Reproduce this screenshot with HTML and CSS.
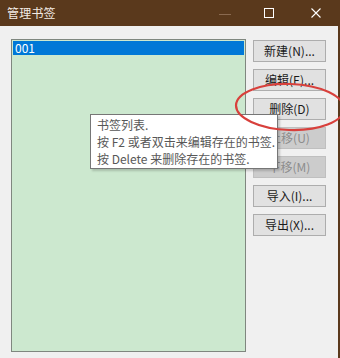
FILE: index.html
```html
<!DOCTYPE html>
<html lang="zh">
<head>
<meta charset="utf-8">
<link rel="stylesheet" href="styles.css">
</head>
<body>
<div class="window">
  <div class="titlebar">
    <span class="title">管理书签</span>
    <div class="controls">
      <span class="ctl min"><svg width="12" height="12" viewBox="0 0 12 12"><line x1="0" y1="6.5" x2="12" y2="6.5" stroke="#8a6a50" stroke-width="1"/></svg></span>
      <span class="ctl max"><svg width="10" height="10" viewBox="0 0 10 10"><rect x="0.5" y="0.5" width="9" height="9" fill="none" stroke="#ffffff" stroke-width="1"/></svg></span>
      <span class="ctl close"><svg width="10" height="10" viewBox="0 0 10 10"><path d="M0.5 0.5 L9.5 9.5 M9.5 0.5 L0.5 9.5" stroke="#ffffff" stroke-width="1.1"/></svg></span>
    </div>
  </div>
  <div class="content">
    <div class="listbox">
      <div class="row selected">001</div>
    </div>
    <div class="buttons">
      <button class="btn">新建(N)...</button>
      <button class="btn">编辑(E)...</button>
      <button class="btn">删除(D)</button>
      <button class="btn disabled">上移(U)</button>
      <button class="btn disabled">下移(M)</button>
      <button class="btn">导入(I)...</button>
      <button class="btn">导出(X)...</button>
    </div>
  </div>
  <div class="tooltip">
    <div>书签列表.</div>
    <div>按 F2 或者双击来编辑存在的书签.</div>
    <div>按 Delete 来删除存在的书签.</div>
  </div>
  <svg class="circle" width="120" height="60" viewBox="0 0 120 60">
    <ellipse cx="56" cy="25" rx="54" ry="23" fill="none" stroke="#d8403c" stroke-width="2.2" transform="rotate(2 56 25)"/>
  </svg>
</div>
</body>
</html>
```

FILE: styles.css
```css
* { box-sizing: border-box; }
html, body { margin: 0; padding: 0; }
body {
  width: 340px;
  height: 358px;
  overflow: hidden;
  font-family: "Noto Sans CJK SC", "Noto Sans", sans-serif;
  font-size: 12px;
  background: #f0f0f0;
}
.window {
  position: relative;
  width: 340px;
  height: 358px;
  background: #f0f0f0;
  border-right: 2px solid #5a391c;
}
.titlebar {
  height: 26px;
  background: #5a391c;
  display: flex;
  align-items: center;
  justify-content: space-between;
  padding-left: 7px;
}
.title {
  color: #f3ece6;
  font-size: 12px;
  line-height: 16px;
  letter-spacing: 0.2px;
}
.controls {
  display: flex;
  align-items: center;
  height: 100%;
}
.ctl {
  display: flex;
  align-items: center;
  justify-content: center;
  height: 100%;
}
.ctl.min { width: 46px; padding-top: 1px; padding-left: 4px; }
.ctl.max { width: 46px; }
.ctl.close { width: 46px; padding-left: 2px; }
.content {
  display: flex;
  align-items: flex-start;
  padding: 13px 0 0 11px;
  gap: 7px;
}
.listbox {
  width: 235px;
  height: 313px;
  background: #cce8cf;
  border: 1px solid #7f877f;
  padding: 1px 1px;
}
.row {
  height: 14px;
  line-height: 14px;
  padding-left: 2px;
  font-size: 12px;
}
.row.selected {
  background: #0078d7;
  color: #ffffff;
}
.buttons {
  display: flex;
  flex-direction: column;
  gap: 7px;
  padding-top: 1px;
}
.btn {
  width: 73px;
  height: 22px;
  margin: 0;
  padding: 0;
  background: #e1e1e1;
  border: 1px solid #adadad;
  font-family: "Noto Sans CJK SC", "Noto Sans", sans-serif;
  font-size: 12px;
  line-height: 18px;
  color: #1a1a1a;
}
.btn.disabled {
  background: #cccccc;
  border-color: #bfbfbf;
  color: #8d8d8d;
}
.tooltip {
  position: absolute;
  left: 90px;
  top: 114px;
  width: 188px;
  height: 55px;
  background: #ffffff;
  border: 1px solid #767676;
  box-shadow: 2px 2px 2px rgba(0,0,0,0.18);
  padding: 1px 0 0 6px;
  color: #575757;
  font-size: 12px;
  line-height: 17px;
  white-space: nowrap;
}
.circle {
  position: absolute;
  left: 234px;
  top: 82px;
}
```
